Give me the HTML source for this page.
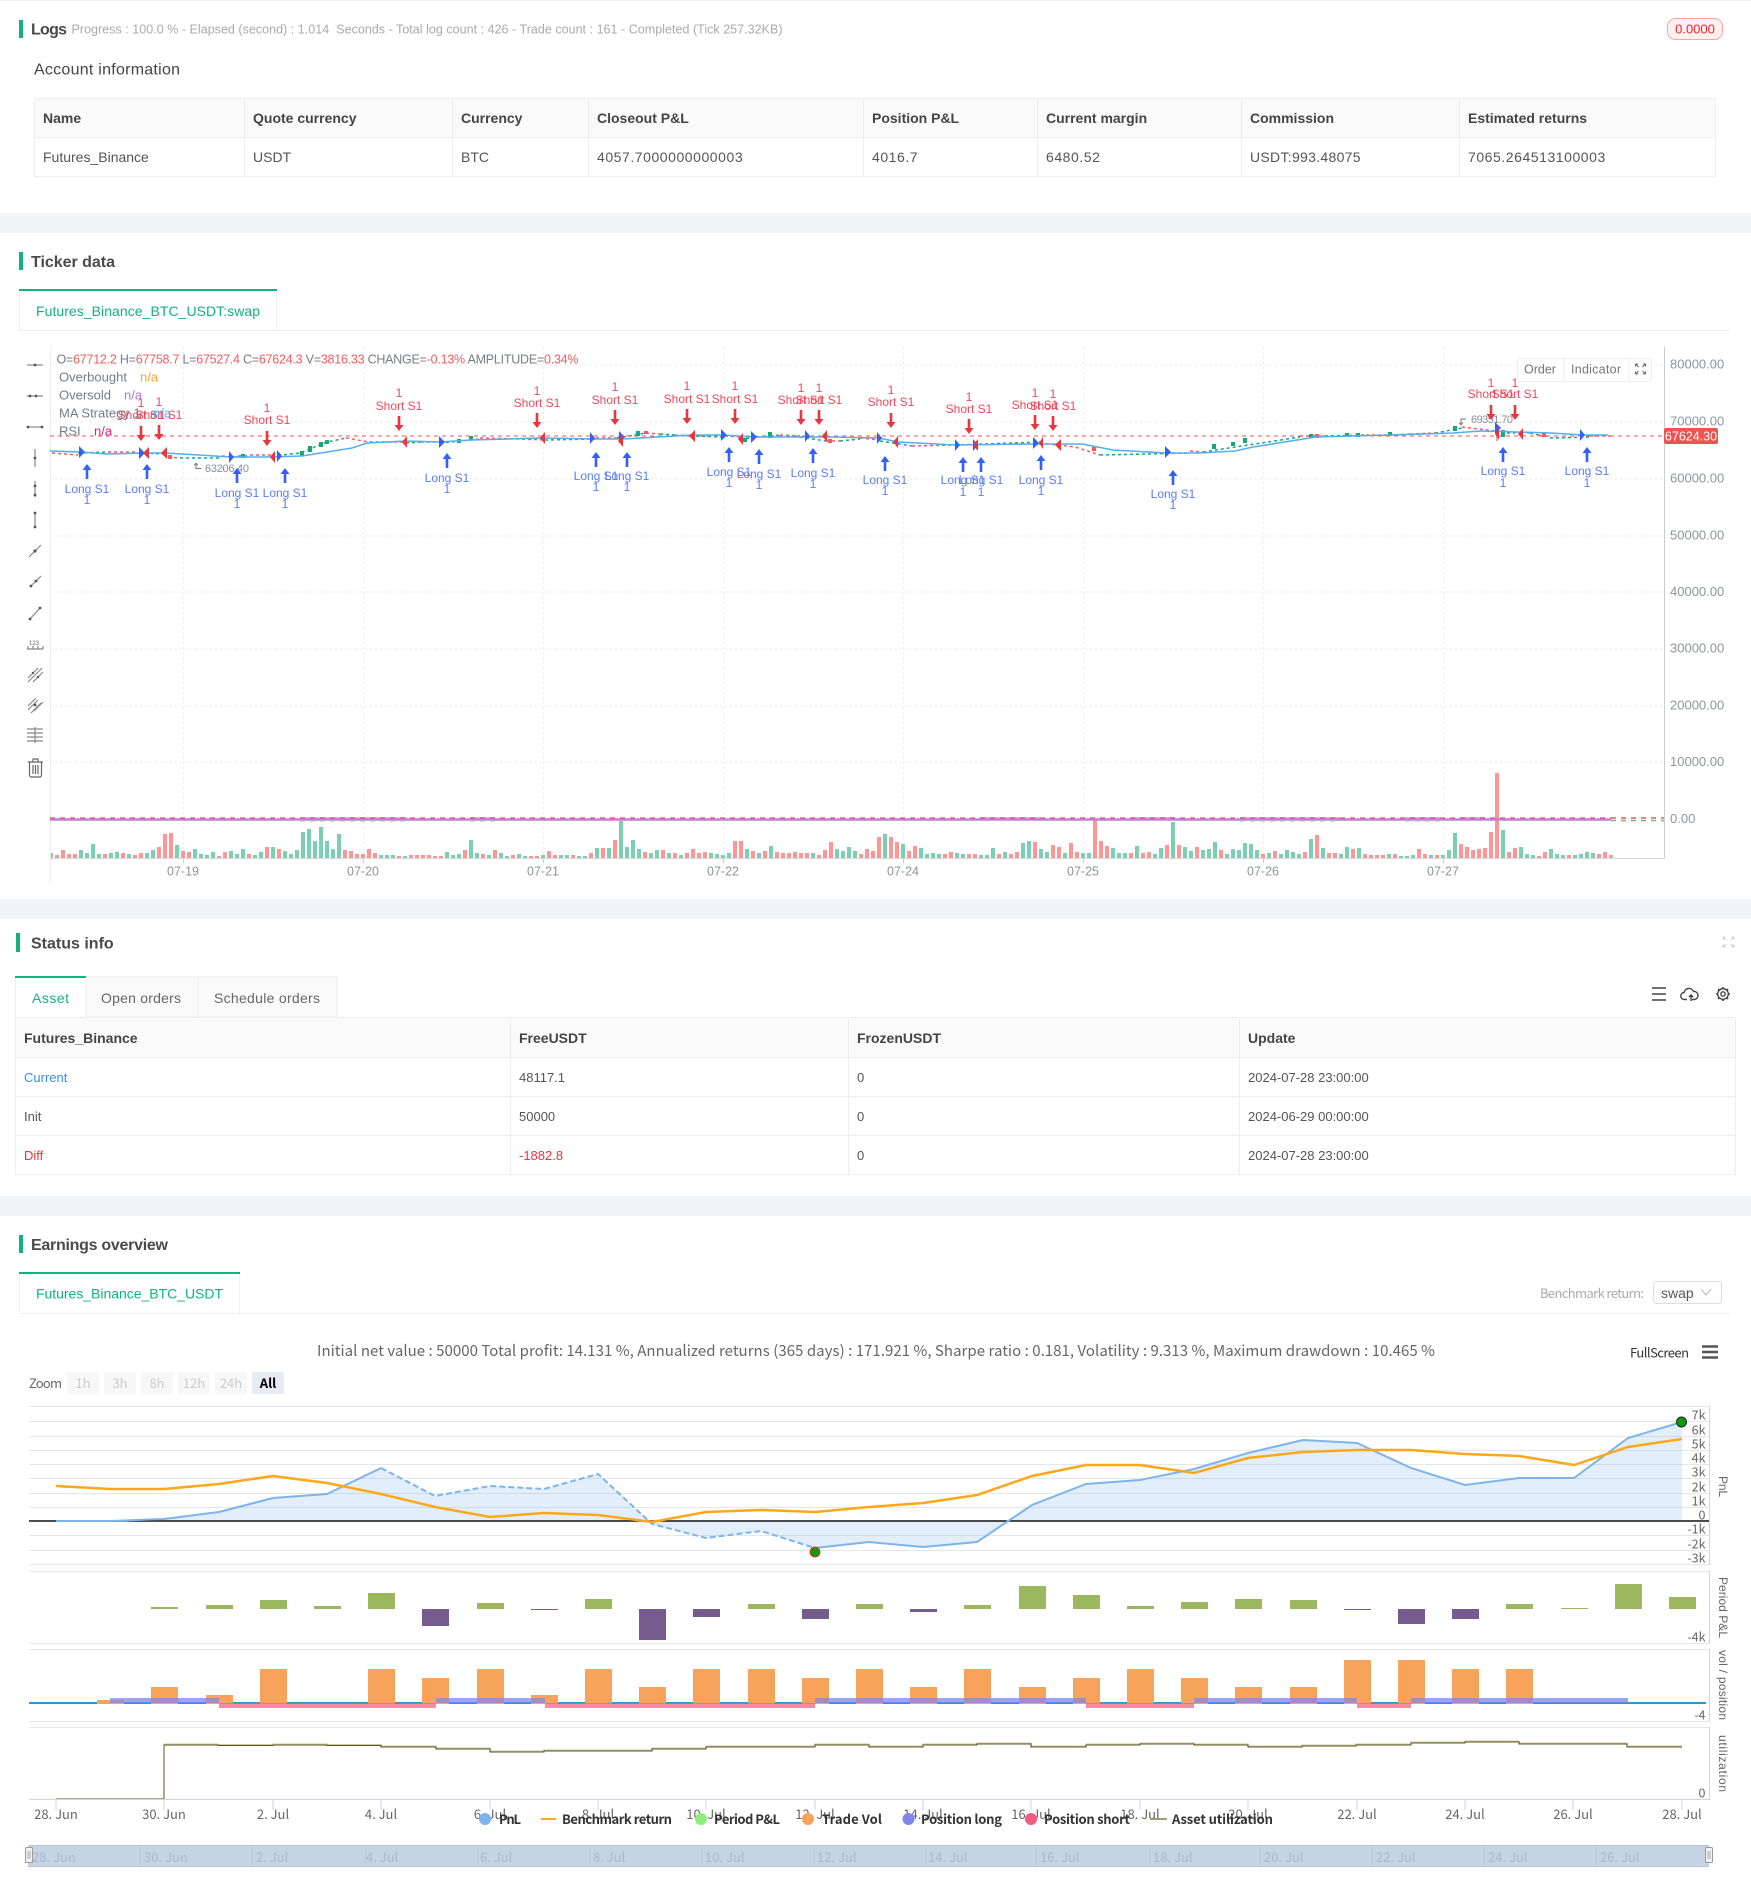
<!DOCTYPE html>
<html lang="en">
<head>
<meta charset="utf-8">
<title>Backtest report</title>
<style>
html,body{margin:0;padding:0;background:#fff}
body{width:1751px;height:1896px;position:relative;overflow:hidden;font-family:"Liberation Sans",sans-serif;color:#555}
svg.page{position:absolute;left:0;top:0}
svg text{font-family:"Liberation Sans",sans-serif}
svg .hc text,svg text.hc{font-family:"Noto Sans CJK SC","Liberation Sans",sans-serif}
table{position:absolute;border-collapse:collapse;table-layout:fixed;font-size:14px;color:#555}
td,th{border:1px solid #eee;padding:0 8px;text-align:left;white-space:nowrap;overflow:hidden}
th{background:#fafafa;color:#444;font-weight:700}
td.n{letter-spacing:.55px}
td.m{letter-spacing:.3px}
.s text{font-size:12px;text-anchor:middle}
.l text{fill:#5b7cf6}
.h text{fill:#f0485a}
</style>
</head>
<body>
<svg class="page" width="1751" height="1896" viewBox="0 0 1751 1896" xmlns="http://www.w3.org/2000/svg">
<defs>
<path id="up" d="M0 0l-4.500 6h3.200v9h2.600v-9h3.200z" fill="#3460f5"/>
<path id="dn" d="M-1.300 0v9h-3.200l4.500 6 4.500-6h-3.200v-9z" fill="#e8353f"/>
</defs>

<!-- section bands -->
<rect x="0" y="0" width="1751" height="1" fill="#f0f1f3"/>
<rect x="0" y="213" width="1751" height="20" fill="#f3f4f6"/>
<rect x="0" y="899" width="1751" height="20" fill="#f3f4f6"/>
<rect x="0" y="1196" width="1751" height="20" fill="#f3f4f6"/>

<!-- Logs -->
<rect x="19" y="20" width="4" height="18" fill="#14b17f"/>
<text x="31" y="34.500" font-size="16" font-weight="700" fill="#4a4a4a" textLength="36">Logs</text>
<text x="71.500" y="33.500" font-size="12.500" fill="#aaa" textLength="711" xml:space="preserve">Progress : 100.0 % - Elapsed (second) : 1.014  Seconds - Total log count : 426 - Trade count : 161 - Completed (Tick 257.32KB)</text>
<rect x="1667.500" y="18.500" width="55" height="21" rx="8" fill="#fff1f0" stroke="#ffa39e"/>
<text x="1695" y="33.500" font-size="13" fill="#f5222d" text-anchor="middle">0.0000</text>
<text x="34" y="74.500" font-size="16" fill="#444" textLength="146">Account information</text>

<!-- Ticker header -->
<rect x="19" y="252" width="4" height="18" fill="#14b17f"/>
<text x="31" y="267" font-size="16" font-weight="700" fill="#4a4a4a" textLength="84">Ticker data</text>
<path d="M19 330.500H1730" stroke="#eee"/>
<path d="M19.500 291V330M276.500 291V330" stroke="#f0f0f0"/>
<rect x="19" y="289" width="258" height="2" fill="#14b17f"/>
<text x="36" y="316" font-size="14" fill="#14b17f" textLength="224">Futures_Binance_BTC_USDT:swap</text>

<!-- main chart grid -->
<g stroke="#e9e9e9" stroke-dasharray="2 3">
<path d="M50 365H1664M50 422H1664M50 479H1664M50 536H1664M50 592H1664M50 649H1664M50 706H1664M50 762H1664"/>
<path d="M183.500 347V858M363.500 347V858M543.500 347V858M723.500 347V858M903.500 347V858M1083.500 347V858M1263.500 347V858M1443.500 347V858"/>
</g>
<path d="M1664.500 347V858" stroke="#ccc"/>
<path d="M183.500 858v5M363.500 858v5M543.500 858v5M723.500 858v5M903.500 858v5M1083.500 858v5M1263.500 858v5M1443.500 858v5" stroke="#ccc"/>

<!-- volume -->
<path fill="none" stroke="#7bcfb2" stroke-width="4" d="M51 858v-5M81 858v-8M87 858v-5M93 858v-14M99 858v-4M111 858v-5M117 858v-6M129 858v-4M147 858v-5M153 858v-8M177 858v-13M195 858v-9M201 858v-4M207 858v-3M213 858v-6M231 858v-7M237 858v-4M243 858v-9M255 858v-3M261 858v-6M273 858v-11M285 858v-7M291 858v-4M297 858v-8M303 858v-26M309 858v-29M315 858v-17M321 858v-31M327 858v-17M333 858v-9M339 858v-24M381 858v-3M387 858v-3M393 858v-3M405 858v-2M447 858v-6M453 858v-3M459 858v-4M471 858v-18M477 858v-5M489 858v-3M501 858v-5M507 858v-2M519 858v-4M525 858v-2M543 858v-3M561 858v-3M567 858v-3M579 858v-2M585 858v-2M597 858v-10M609 858v-10M621 858v-37M627 858v-11M633 858v-18M639 858v-9M651 858v-5M657 858v-8M669 858v-5M681 858v-3M711 858v-5M717 858v-4M723 858v-3M729 858v-5M747 858v-9M759 858v-5M771 858v-12M813 858v-5M837 858v-9M843 858v-7M849 858v-11M855 858v-7M885 858v-24M903 858v-14M921 858v-10M927 858v-4M933 858v-5M939 858v-4M957 858v-5M963 858v-4M981 858v-3M987 858v-3M993 858v-10M1005 858v-6M1023 858v-15M1029 858v-17M1041 858v-9M1047 858v-6M1065 858v-5M1083 858v-5M1089 858v-5M1113 858v-10M1119 858v-5M1125 858v-5M1137 858v-12M1155 858v-4M1161 858v-10M1173 858v-36M1185 858v-11M1191 858v-7M1203 858v-8M1209 858v-9M1215 858v-16M1227 858v-4M1233 858v-9M1239 858v-8M1245 858v-15M1251 858v-14M1257 858v-8M1269 858v-5M1281 858v-4M1287 858v-8M1293 858v-6M1299 858v-4M1311 858v-19M1323 858v-10M1341 858v-4M1347 858v-11M1359 858v-10M1389 858v-4M1401 858v-2M1407 858v-2M1413 858v-3M1431 858v-3M1443 858v-3M1449 858v-8M1455 858v-25M1503 858v-28M1521 858v-11M1527 858v-4M1533 858v-3M1551 858v-9M1557 858v-4M1563 858v-3M1575 858v-3M1581 858v-4M1587 858v-6M1593 858v-5"/>
<path fill="none" stroke="#ff9696" stroke-width="4" d="M57 858v-3M63 858v-8M69 858v-4M75 858v-4M105 858v-4M123 858v-5M135 858v-3M141 858v-5M159 858v-11M165 858v-24M171 858v-25M183 858v-7M189 858v-6M219 858v-2M225 858v-6M249 858v-4M267 858v-11M279 858v-9M345 858v-8M351 858v-7M357 858v-4M363 858v-4M369 858v-9M375 858v-5M399 858v-2M411 858v-3M417 858v-3M423 858v-3M429 858v-3M435 858v-2M441 858v-2M465 858v-8M483 858v-4M495 858v-8M513 858v-3M531 858v-2M537 858v-2M549 858v-7M555 858v-3M573 858v-3M591 858v-5M603 858v-10M615 858v-18M645 858v-6M663 858v-8M675 858v-5M687 858v-5M693 858v-9M699 858v-5M705 858v-6M735 858v-17M741 858v-17M753 858v-7M765 858v-7M777 858v-6M783 858v-5M789 858v-5M795 858v-6M801 858v-5M807 858v-5M819 858v-3M825 858v-8M831 858v-16M861 858v-4M867 858v-9M873 858v-7M879 858v-21M891 858v-21M897 858v-16M909 858v-7M915 858v-12M945 858v-4M951 858v-6M969 858v-4M975 858v-4M999 858v-4M1011 858v-4M1017 858v-6M1035 858v-16M1053 858v-13M1059 858v-11M1071 858v-15M1077 858v-6M1095 858v-39M1101 858v-17M1107 858v-12M1131 858v-5M1143 858v-5M1149 858v-6M1167 858v-13M1179 858v-13M1197 858v-11M1221 858v-8M1263 858v-4M1275 858v-7M1305 858v-6M1317 858v-23M1329 858v-5M1335 858v-5M1353 858v-9M1365 858v-4M1371 858v-3M1377 858v-3M1383 858v-3M1395 858v-4M1419 858v-9M1425 858v-4M1437 858v-3M1461 858v-14M1467 858v-11M1473 858v-8M1479 858v-9M1485 858v-10M1491 858v-26M1497 858v-85M1509 858v-6M1515 858v-10M1539 858v-2M1545 858v-6M1569 858v-3M1599 858v-4M1605 858v-6M1611 858v-3"/>
<rect x="40" y="845" width="10" height="14" fill="#fff"/>
<path d="M50.500 347V883" stroke="#eee"/>
<path d="M50 858.500H1664.500" stroke="#d9d9d9"/>

<!-- RSI lines -->
<path d="M50 819.500H1611" stroke="#bf82d0" stroke-width="2.500"/>
<path d="M300 818H407M470 818H495M980 818H1040M1130 818H1175M1240 818H1340M1405 818H1440M1460 818H1485" stroke="#c795d8" stroke-width="1.500"/>
<path d="M300 821H407M470 821H495M1240 821H1340M1405 821H1440" stroke="#a5d6b8" stroke-width="1.200" stroke-dasharray="5 5"/>
<path d="M50 818H1611" stroke="#ea2f7d" stroke-opacity=".85" stroke-width="1.200" stroke-dasharray="5 5"/>
<path d="M1611 818H1664" stroke="#d9605a" stroke-width="1.500" stroke-dasharray="5 5"/>
<path d="M1611 820.500H1664" stroke="#7db27f" stroke-width="1.500" stroke-dasharray="5 5"/>

<!-- price line -->
<path d="M50 436H1664" stroke="#ff4d4f" stroke-width="1" stroke-dasharray="4 4"/>
<path fill="none" stroke="#f25c5f" stroke-width="1.500" stroke-dasharray="3 3" d="M52 453L78 455M108 452L138 452M168 457L180 458M222 456L238 457M250 455L272 455M346 438L369 442L406 442M421 442L440 442M480 438L520 439L545 440M596 438L617 438M646 433L660 434M675 435L690 436M725 436L740 437M780 435L800 436M826 441L840 441M860 438L880 440M912 446L955 445M1040 443L1075 447L1100 455M1190 451L1203 452M1300 436L1325 436M1366 435L1395 435M1410 434L1435 433M1462 427L1495 431M1515 432L1530 433M1538 435L1550 437M1590 436L1611 436"/>
<path fill="none" stroke="#14a97a" stroke-width="1.500" stroke-dasharray="3 3" d="M78 453L108 452M138 453L166 454M180 458L222 458M238 456L250 456M272 456L300 453L327 442L346 438M406 443L421 442M440 443L480 439M545 440L596 439M617 438L646 433M660 434L675 435M690 436L725 437M740 439L780 435M800 437L826 441M840 441L860 439M880 441L912 446M955 445L1040 442M1100 455L1190 453M1203 452L1300 437M1325 436L1366 435M1395 435L1410 434M1435 433L1462 428M1495 433L1515 433M1530 433L1538 435M1550 438L1590 437"/>
<g fill="#14a97a"><rect x="241" y="454" width="4" height="4"/><rect x="300" y="451" width="4" height="5"/><rect x="308" y="446" width="4" height="6"/><rect x="319" y="442" width="4" height="5"/><rect x="325" y="440" width="4" height="4"/><rect x="457" y="439" width="4" height="4"/><rect x="469" y="436" width="4" height="4"/><rect x="636" y="431" width="4" height="5"/><rect x="743" y="438" width="4" height="4"/><rect x="768" y="432" width="4" height="6"/><rect x="1212" y="444" width="4" height="5"/><rect x="1231" y="442" width="4" height="4"/><rect x="1243" y="438" width="4" height="5"/><rect x="1309" y="434" width="4" height="4"/><rect x="1345" y="433" width="4" height="4"/><rect x="1356" y="433" width="4" height="4"/><rect x="1388" y="432" width="4" height="4"/><rect x="1453" y="426" width="4" height="5"/><rect x="1501" y="430" width="4" height="7"/></g>
<g fill="#f25c5f"><rect x="168" y="455" width="4" height="4"/><rect x="644" y="431" width="4" height="3"/><rect x="828" y="439" width="4" height="4"/><rect x="1315" y="434" width="4" height="4"/><rect x="1092" y="446" width="4" height="5"/><rect x="1542" y="433" width="4" height="4"/></g>
<path d="M1497 430V441" stroke="#f9a0a0" stroke-width="2"/>
<path fill="none" stroke="#55aef0" stroke-width="1.600" d="M50 451L80 452L107 454L142 453L165 453L199 455L230 457L268 457L302 456L352 448L367 443L406 441L440 442L471 440L540 438L597 439L623 439L692 435L722 435L753 437L807 437L830 437L879 438L898 442L956 445L1032 444L1082 444L1113 450L1166 453L1200 453L1235 451L1253 447L1316 437L1390 435L1453 433L1481 431L1551 433L1583 435L1608 435"/>

<!-- entry triangles -->
<g fill="#3460f5"><polygon points="79,446 85,452 79,458"/><polygon points="139,447 145,453 139,459"/><polygon points="229,451 234,457 229,463"/><polygon points="277,450 282,456 277,462"/><polygon points="439,436 445,442 439,448"/><polygon points="590,432 595,438 590,444"/><polygon points="619,431 625,437 619,443"/><polygon points="721,429 727,435 721,441"/><polygon points="751,431 757,437 751,443"/><polygon points="805,430 810,436 805,442"/><polygon points="877,432 882,438 877,444"/><polygon points="955,439 960,445 955,451"/><polygon points="973,439 978,445 973,451"/><polygon points="1033,437 1039,443 1033,449"/><polygon points="1165,446 1171,452 1165,458"/><polygon points="1495,422 1501,428 1495,434"/><polygon points="1580,429 1585,435 1580,441"/></g>
<g fill="#e8353f"><polygon points="149,447 143,453 149,459"/><polygon points="167,447 161,453 167,459"/><polygon points="275,451 270,457 275,463"/><polygon points="407,436 402,442 407,448"/><polygon points="545,432 540,438 545,444"/><polygon points="623,435 618,441 623,447"/><polygon points="695,430 689,436 695,442"/><polygon points="743,433 738,439 743,445"/><polygon points="827,430 822,436 827,442"/><polygon points="898,436 893,442 898,448"/><polygon points="978,439 973,445 978,451"/><polygon points="1043,437 1039,443 1043,449"/><polygon points="1061,439 1055,445 1061,451"/><polygon points="1499,428 1495,434 1499,440"/><polygon points="1523,428 1518,434 1523,440"/></g>

<!-- annotations -->
<path d="M201.500 468.500H196V463M196 463l-2 2.500M196 463l2 2.500" fill="none" stroke="#777" stroke-width="1"/>
<text x="205" y="472" font-size="11" fill="#8a8d96" textLength="44">63206.40</text>
<path d="M1466 419h-5v6M1461 425l-2-2.500M1461 425l2-2.500" fill="none" stroke="#777" stroke-width="1"/>
<text x="1471" y="423" font-size="11" fill="#8a8d96" textLength="42">69351.70</text>

<!-- long signals -->
<g class="s l">
<use href="#up" x="87" y="464"/><text x="87" y="493">Long S1</text><text x="87" y="504">1</text>
<use href="#up" x="147" y="464"/><text x="147" y="493">Long S1</text><text x="147" y="504">1</text>
<use href="#up" x="237" y="468"/><text x="237" y="497">Long S1</text><text x="237" y="508">1</text>
<use href="#up" x="285" y="468"/><text x="285" y="497">Long S1</text><text x="285" y="508">1</text>
<use href="#up" x="447" y="453"/><text x="447" y="482">Long S1</text><text x="447" y="493">1</text>
<use href="#up" x="596" y="452"/><text x="596" y="480">Long S1</text><text x="596" y="491">1</text>
<use href="#up" x="627" y="452"/><text x="627" y="480">Long S1</text><text x="627" y="491">1</text>
<use href="#up" x="729" y="447"/><text x="729" y="476">Long S1</text><text x="729" y="487">1</text>
<use href="#up" x="759" y="449"/><text x="759" y="478">Long S1</text><text x="759" y="489">1</text>
<use href="#up" x="813" y="448"/><text x="813" y="477">Long S1</text><text x="813" y="488">1</text>
<use href="#up" x="885" y="456"/><text x="885" y="484">Long S1</text><text x="885" y="495">1</text>
<use href="#up" x="963" y="457"/><text x="963" y="484">Long S1</text><text x="963" y="496">1</text>
<use href="#up" x="981" y="457"/><text x="981" y="484">Long S1</text><text x="981" y="496">1</text>
<use href="#up" x="1041" y="455"/><text x="1041" y="484">Long S1</text><text x="1041" y="495">1</text>
<use href="#up" x="1173" y="470"/><text x="1173" y="498">Long S1</text><text x="1173" y="509">1</text>
<use href="#up" x="1503" y="447"/><text x="1503" y="475">Long S1</text><text x="1503" y="487">1</text>
<use href="#up" x="1587" y="447"/><text x="1587" y="475">Long S1</text><text x="1587" y="487">1</text>
</g>
<!-- short signals -->
<g class="s h">
<text x="141" y="407">1</text><text x="141" y="419">Short S1</text><use href="#dn" x="141" y="426"/>
<text x="159" y="406">1</text><text x="159" y="419">Short S1</text><use href="#dn" x="159" y="425"/>
<text x="267" y="412">1</text><text x="267" y="424">Short S1</text><use href="#dn" x="267" y="431"/>
<text x="399" y="397">1</text><text x="399" y="410">Short S1</text><use href="#dn" x="399" y="416"/>
<text x="537" y="395">1</text><text x="537" y="407">Short S1</text><use href="#dn" x="537" y="413"/>
<text x="615" y="391">1</text><text x="615" y="404">Short S1</text><use href="#dn" x="615" y="410"/>
<text x="687" y="390">1</text><text x="687" y="403">Short S1</text><use href="#dn" x="687" y="409"/>
<text x="735" y="390">1</text><text x="735" y="403">Short S1</text><use href="#dn" x="735" y="409"/>
<text x="801" y="392">1</text><text x="801" y="404">Short S1</text><use href="#dn" x="801" y="410"/>
<text x="819" y="392">1</text><text x="819" y="404">Short S1</text><use href="#dn" x="819" y="410"/>
<text x="891" y="394">1</text><text x="891" y="406">Short S1</text><use href="#dn" x="891" y="413"/>
<text x="969" y="401">1</text><text x="969" y="413">Short S1</text><use href="#dn" x="969" y="419"/>
<text x="1035" y="397">1</text><text x="1035" y="409">Short S1</text><use href="#dn" x="1035" y="415"/>
<text x="1053" y="398">1</text><text x="1053" y="410">Short S1</text><use href="#dn" x="1053" y="416"/>
<text x="1491" y="387">1</text><text x="1491" y="398">Short S1</text><use href="#dn" x="1491" y="405"/>
<text x="1515" y="387">1</text><text x="1515" y="398">Short S1</text><use href="#dn" x="1515" y="405"/>
</g>

<!-- chart legend -->
<text x="56.500" y="363.500" font-size="12.500" fill="#787b86" textLength="522"><tspan>O=</tspan><tspan fill="#f25c5f">67712.2</tspan><tspan> H=</tspan><tspan fill="#f25c5f">67758.7</tspan><tspan> L=</tspan><tspan fill="#f25c5f">67527.4</tspan><tspan> C=</tspan><tspan fill="#f25c5f">67624.3</tspan><tspan> V=</tspan><tspan fill="#f25c5f">3816.33</tspan><tspan> CHANGE=</tspan><tspan fill="#f25c5f">-0.13%</tspan><tspan> AMPLITUDE=</tspan><tspan fill="#f25c5f">0.34%</tspan></text>
<g font-size="13" fill="#787b86">
<text x="59" y="381.500">Overbought</text><text x="140" y="381.500" fill="#ffa726">n/a</text>
<text x="59" y="399.500">Oversold</text><text x="124" y="399.500" fill="#a978d8">n/a</text>
<text x="59" y="417.500">MA Strategy 1</text><text x="153" y="417.500" fill="#55aef0">n/a</text>
<text x="59" y="435.500">RSI</text><text x="94" y="435.500" fill="#e91e80">n/a</text>
</g>

<!-- axis labels -->
<g font-size="13" fill="#8f939c">
<text x="1670" y="368.500">80000.00</text><text x="1670" y="425.500">70000.00</text><text x="1670" y="482.500">60000.00</text><text x="1670" y="539.500">50000.00</text><text x="1670" y="596">40000.00</text><text x="1670" y="652.500">30000.00</text><text x="1670" y="709.500">20000.00</text><text x="1670" y="766">10000.00</text><text x="1670" y="823">0.00</text>
</g>
<g font-size="12.500" fill="#8f939c" text-anchor="middle">
<text x="183" y="875.500">07-19</text><text x="363" y="875.500">07-20</text><text x="543" y="875.500">07-21</text><text x="723" y="875.500">07-22</text><text x="903" y="875.500">07-24</text><text x="1083" y="875.500">07-25</text><text x="1263" y="875.500">07-26</text><text x="1443" y="875.500">07-27</text>
</g>
<rect x="1664" y="428" width="54" height="16" rx="2" fill="#ef5350"/>
<text x="1691" y="440.500" font-size="12.500" fill="#fff" text-anchor="middle">67624.30</text>

<!-- order / indicator -->
<rect x="1517.500" y="358.500" width="134" height="23" rx="3" fill="#fff" fill-opacity=".9" stroke="#eee"/>
<path d="M1564 359V381M1629 359V381" stroke="#eee"/>
<text x="1524" y="373.500" font-size="12.500" fill="#777">Order</text>
<text x="1571" y="373.500" font-size="12.500" fill="#777" textLength="50">Indicator</text>
<path d="M1635.500 364l3 3M1635.500 364h2.500M1635.500 364v2.500M1645.500 364l-3 3M1645.500 364h-2.500M1645.500 364v2.500M1635.500 374l3-3M1635.500 374h2.500M1635.500 374v-2.500M1645.500 374l-3-3M1645.500 374h-2.500M1645.500 374v-2.500" fill="none" stroke="#666" stroke-width="1"/>

<!-- drawing tool icons -->
<g stroke="#888" stroke-width="1.200" fill="#555">
<path d="M27 365H43"/><circle cx="35" cy="365" r="1.400" stroke="none"/>
<path d="M27 396H43"/><circle cx="30" cy="396" r="1.400" stroke="none"/><circle cx="36" cy="396" r="1.400" stroke="none"/>
<path d="M27 427H43"/><circle cx="28" cy="427" r="1.400" stroke="none"/><circle cx="42" cy="427" r="1.400" stroke="none"/>
<path d="M35 449V467"/><circle cx="35" cy="458" r="1.400" stroke="none"/>
<path d="M35 481V497"/><circle cx="35" cy="486" r="1.400" stroke="none"/><circle cx="35" cy="495" r="1.400" stroke="none"/>
<path d="M35 513V527"/><circle cx="35" cy="513" r="1.400" stroke="none"/><circle cx="35" cy="527" r="1.400" stroke="none"/>
<path d="M29 557L41 545"/><circle cx="35" cy="551" r="1.600" stroke="none"/>
<path d="M30 587L41 576"/><circle cx="31" cy="586" r="1.400" stroke="none"/><circle cx="36" cy="581" r="1.400" stroke="none"/>
<path d="M30 619L40 608"/><circle cx="30" cy="619" r="1.400" stroke="none"/><circle cx="40" cy="608" r="1.400" stroke="none"/>
<path d="M27 649H43M28 649v-3M33 649v-3M38 649v-3M43 649v-3" fill="none"/>
<path d="M28 678L38 668M33 682L43 672M28 682L42 668" fill="none"/><circle cx="33" cy="673" r="1.200" stroke="none"/><circle cx="38" cy="677" r="1.200" stroke="none"/>
<path d="M28 710L38 700M31 713L41 703M34 711L43 702M28 706L36 698" fill="none"/><circle cx="35" cy="705" r="1.400" stroke="none"/>
<path d="M27 729H43M27 733H43M27 737H43M27 741H43M35 727V743" fill="none"/>
<path d="M28 762H43M33 762v-3h5v3M29.500 762V775a2 2 0 0 0 2 2h8a2 2 0 0 0 2-2V762M33 765V774M35.500 765V774M38 765V774" fill="none" stroke="#666"/>
</g>
<text x="29" y="645" font-size="6" fill="#666">123</text>

<!-- Status info -->
<rect x="16" y="933" width="4" height="19" fill="#14b17f"/>
<text x="31" y="948.500" font-size="16" font-weight="700" fill="#4a4a4a">Status info</text>
<path d="M1723 937l3 3M1723 937h2.500M1723 937v2.500M1734 937l-3 3M1734 937h-2.500M1734 937v2.500M1723 947l3-3M1723 947h2.500M1723 947v-2.500M1734 947l-3-3M1734 947h-2.500M1734 947v-2.500" fill="none" stroke="#ccc" stroke-width="1"/>
<rect x="86" y="977" width="112" height="40" fill="#fafafa" stroke="#eee"/>
<rect x="198" y="977" width="139" height="40" fill="#fafafa" stroke="#eee"/>
<rect x="15" y="976" width="71" height="2" fill="#14b17f"/>
<path d="M15.500 978V1018" stroke="#eee"/>
<text x="32" y="1003" font-size="14" fill="#14b17f" textLength="37">Asset</text>
<text x="101" y="1003" font-size="14" fill="#666" textLength="80">Open orders</text>
<text x="214" y="1003" font-size="14" fill="#666" textLength="106">Schedule orders</text>
<path d="M1652 988h14M1652 994h14M1652 1000h14" stroke="#444" stroke-width="1.600"/>
<path d="M1687 999.500h-2.500a3.500 3.500 0 0 1-.5-7 5 5 0 0 1 9.500-1 4 4 0 0 1 1 8h-2.500M1691 1001v-6M1689 997l2-2 2 2" fill="none" stroke="#444" stroke-width="1.400"/>
<circle cx="1723" cy="994" r="2.200" fill="none" stroke="#444" stroke-width="1.300"/>
<circle cx="1723" cy="994" r="5.300" fill="none" stroke="#444" stroke-width="1.300"/>
<path d="M1723 987v2M1723 999v2M1716 994h2M1728 994h2M1718 989l1.400 1.400M1726.600 997.600l1.400 1.400M1728 989l-1.400 1.400M1719.400 997.600l-1.400 1.400" stroke="#444" stroke-width="1.600"/>

<!-- Earnings overview -->
<rect x="19" y="1235" width="4" height="18" fill="#14b17f"/>
<text x="31" y="1250" font-size="16" font-weight="700" fill="#4a4a4a" textLength="137">Earnings overview</text>
<path d="M19 1313.500H1730" stroke="#eee"/>
<path d="M19.500 1274V1313M239.500 1274V1313" stroke="#f0f0f0"/>
<rect x="19" y="1272" width="221" height="2" fill="#14b17f"/>
<text x="36" y="1298.500" font-size="14" fill="#14b17f" textLength="187">Futures_Binance_BTC_USDT</text>
<text x="1540" y="1298" class="hc" font-size="13" fill="#aaa" textLength="104">Benchmark return:</text>
<rect x="1653.500" y="1281.500" width="68" height="22" rx="3" fill="#fff" stroke="#ddd"/>
<text x="1661" y="1298" font-size="14" fill="#555">swap</text>
<path d="M1701 1289l5 6 5-6" fill="none" stroke="#bbb"/>

<text class="hc" x="317" y="1356" font-size="15" fill="#666" textLength="1118">Initial net value : 50000 Total profit: 14.131 %, Annualized returns (365 days) : 171.921 %, Sharpe ratio : 0.181, Volatility : 9.313 %, Maximum drawdown : 10.465 %</text>
<text class="hc" x="1630" y="1357.500" font-size="13" fill="#333" textLength="59">FullScreen</text>
<path d="M1702 1346.500h16M1702 1352h16M1702 1357.500h16" stroke="#555" stroke-width="2.600"/>

<!-- range selector -->
<text class="hc" x="29" y="1388" font-size="13" fill="#666" textLength="33">Zoom</text>
<g fill="#f7f7f7"><rect x="67" y="1372" width="32" height="22" rx="2"/><rect x="104" y="1372" width="32" height="22" rx="2"/><rect x="141" y="1372" width="32" height="22" rx="2"/><rect x="178" y="1372" width="32" height="22" rx="2"/><rect x="215" y="1372" width="32" height="22" rx="2"/></g>
<rect x="252" y="1372" width="32" height="22" rx="2" fill="#e6ebf5"/>
<g class="hc" font-size="13" fill="#ccc" text-anchor="middle"><text x="83" y="1388">1h</text><text x="120" y="1388">3h</text><text x="157" y="1388">8h</text><text x="194" y="1388">12h</text><text x="231" y="1388">24h</text><text x="268" y="1388" fill="#000" font-weight="700">All</text></g>

<!-- PnL pane -->
<path d="M29 1406.500H1709M29 1421.500H1709M29 1436.500H1709M29 1450.500H1709M29 1464.500H1709M29 1478.500H1709M29 1493.500H1709M29 1507.500H1709M29 1535.500H1709M29 1550.500H1709M29 1564.500H1709" stroke="#e6e6e6"/>
<path d="M1709.500 1406V1565" stroke="#ccd6eb"/>
<path fill="#7cb5ec" fill-opacity=".22" d="M56 1521L110 1521L164 1519L219 1512L273 1498L327 1494L381 1468L435 1496L490 1486L544 1489L598 1474L652 1524L706 1538L761 1531L815 1548L869 1542L923 1547L977 1542L1032 1505L1086 1484L1140 1480L1194 1469L1248 1453L1303 1440L1357 1443L1411 1468L1465 1485L1519 1478L1574 1478L1628 1438L1682 1422L1682 1521Z"/>
<path d="M29 1521H1709" stroke="#111" stroke-width="1.500"/>
<path fill="none" stroke="#7cb5ec" stroke-width="2" d="M56 1521L110 1521L164 1519L219 1512L273 1498L327 1494L381 1468"/>
<path fill="none" stroke="#7cb5ec" stroke-width="2" stroke-dasharray="6 3" d="M381 1468L435 1496L490 1486L544 1489L598 1474L652 1524L706 1538L761 1531L815 1548"/>
<path fill="none" stroke="#7cb5ec" stroke-width="2" d="M815 1548L869 1542L923 1547L977 1542L1032 1505L1086 1484L1140 1480L1194 1469L1248 1453L1303 1440L1357 1443L1411 1468L1465 1485L1519 1478L1574 1478L1628 1438L1682 1422"/>
<path fill="none" stroke="#ffa71a" stroke-width="2.500" d="M56 1486L110 1489L164 1489L219 1484L273 1476L327 1483L381 1494L435 1507L490 1517L544 1513L598 1515L652 1522L706 1512L761 1510L815 1512L869 1507L923 1503L977 1495L1032 1476L1086 1465L1140 1465L1194 1473L1248 1458L1303 1452L1357 1450L1411 1450L1465 1454L1519 1456L1574 1465L1628 1447L1682 1439"/>
<circle cx="815" cy="1552" r="5" fill="#0a9a0a" stroke="#f03030"/>
<circle cx="1681.500" cy="1422" r="5" fill="#0a9a0a" stroke="#222"/>
<g class="hc" font-size="12.500" fill="#666" text-anchor="end">
<text x="1705.500" y="1419.500">7k</text><text x="1705.500" y="1434.500">6k</text><text x="1705.500" y="1448.500">5k</text><text x="1705.500" y="1462.500">4k</text><text x="1705.500" y="1476.500">3k</text><text x="1705.500" y="1491.500">2k</text><text x="1705.500" y="1505.500">1k</text><text x="1705.500" y="1519.500">0</text><text x="1705.500" y="1533.500">-1k</text><text x="1705.500" y="1548.500">-2k</text><text x="1705.500" y="1562.500">-3k</text>
<text x="1705.500" y="1641.500">-4k</text><text x="1705.500" y="1719.500">-4</text><text x="1705.500" y="1797.500">0</text>
</g>
<g font-size="12" fill="#666">
<text transform="translate(1719 1476) rotate(90)" textLength="21">PnL</text>
<text transform="translate(1719 1577) rotate(90)" textLength="61">Period P&amp;L</text>
<text transform="translate(1719 1650) rotate(90)" textLength="70">vol / position</text>
<text transform="translate(1719 1735) rotate(90)" textLength="57">utilization</text>
</g>

<!-- Period P&L pane -->
<path d="M29 1571.500H1709M29 1643.500H1709M29 1649.500H1709M29 1721.500H1709M29 1727.500H1709" stroke="#e6e6e6"/>
<path d="M1709.500 1571V1644M1709.500 1649V1722M1709.500 1727V1800" stroke="#ccd6eb"/>
<g fill="#9bb85f">
<rect x="151" y="1607" width="27" height="2"/><rect x="206" y="1605" width="27" height="4"/><rect x="260" y="1600" width="27" height="9"/><rect x="314" y="1606" width="27" height="3"/><rect x="368" y="1593" width="27" height="16"/><rect x="477" y="1603" width="27" height="6"/><rect x="585" y="1599" width="27" height="10"/><rect x="748" y="1604" width="27" height="5"/><rect x="856" y="1604" width="27" height="5"/><rect x="964" y="1605" width="27" height="4"/><rect x="1019" y="1586" width="27" height="23"/><rect x="1073" y="1595" width="27" height="14"/><rect x="1127" y="1606" width="27" height="3"/><rect x="1181" y="1602" width="27" height="7"/><rect x="1235" y="1599" width="27" height="10"/><rect x="1290" y="1600" width="27" height="9"/><rect x="1506" y="1604" width="27" height="5"/><rect x="1561" y="1608" width="27" height="1"/><rect x="1615" y="1584" width="27" height="25"/><rect x="1669" y="1597" width="27" height="12"/>
</g>
<g fill="#755c8e">
<rect x="422" y="1609" width="27" height="17"/><rect x="531" y="1609" width="27" height="1"/><rect x="639" y="1609" width="27" height="31"/><rect x="693" y="1609" width="27" height="8"/><rect x="802" y="1609" width="27" height="10"/><rect x="910" y="1609" width="27" height="3"/><rect x="1344" y="1609" width="27" height="1"/><rect x="1398" y="1609" width="27" height="15"/><rect x="1452" y="1609" width="27" height="10"/>
</g>

<!-- vol / position pane -->
<path d="M29 1703H1706" stroke="#1f9dd0" stroke-width="2"/>
<g fill="#f7a35c">
<rect x="97" y="1700" width="27" height="4"/><rect x="151" y="1687" width="27" height="17"/><rect x="206" y="1695" width="27" height="9"/><rect x="260" y="1669" width="27" height="35"/><rect x="368" y="1669" width="27" height="35"/><rect x="422" y="1678" width="27" height="26"/><rect x="477" y="1669" width="27" height="35"/><rect x="531" y="1695" width="27" height="9"/><rect x="585" y="1669" width="27" height="35"/><rect x="639" y="1687" width="27" height="17"/><rect x="693" y="1669" width="27" height="35"/><rect x="748" y="1669" width="27" height="35"/><rect x="802" y="1678" width="27" height="26"/><rect x="856" y="1669" width="27" height="35"/><rect x="910" y="1687" width="27" height="17"/><rect x="964" y="1669" width="27" height="35"/><rect x="1019" y="1687" width="27" height="17"/><rect x="1073" y="1678" width="27" height="26"/><rect x="1127" y="1669" width="27" height="35"/><rect x="1181" y="1678" width="27" height="26"/><rect x="1235" y="1687" width="27" height="17"/><rect x="1290" y="1687" width="27" height="17"/><rect x="1344" y="1660" width="27" height="44"/><rect x="1398" y="1660" width="27" height="44"/><rect x="1452" y="1669" width="27" height="35"/><rect x="1506" y="1669" width="27" height="35"/>
</g>
<g fill="#8085e9" fill-opacity=".75">
<rect x="110" y="1698" width="109" height="5"/><rect x="436" y="1698" width="109" height="5"/><rect x="815" y="1698" width="271" height="5"/><rect x="1194" y="1698" width="163" height="5"/><rect x="1411" y="1698" width="217" height="5"/>
</g>
<g fill="#f15c80" fill-opacity=".7">
<rect x="219" y="1703" width="217" height="5"/><rect x="545" y="1703" width="270" height="5"/><rect x="1086" y="1703" width="108" height="5"/><rect x="1357" y="1703" width="54" height="5"/>
</g>

<!-- utilization pane -->
<path d="M29 1799.500H1709" stroke="#ccd6eb"/>
<path d="M56 1798.500H164" stroke="#b4ae88" stroke-width="1"/>
<path fill="none" stroke="#b4ae88" stroke-width="1.500" stroke-opacity=".7" d="M164 1744.300H218V1744.800H273V1744.300H327V1744.800H381V1746.300H436V1748.300H490V1751.300H544V1750.300H652V1748.300H706V1746.300H761V1746.300H815V1744.300H869V1746.300H923V1744.300H977V1743.300H1031V1746.300H1086V1744.300H1140V1743.300H1194V1744.300H1248V1746.300H1302V1745.300H1356V1744.300H1411V1742.300H1465V1741.300H1519V1743.300H1573V1743.300H1627V1746.300H1682"/>
<path fill="none" stroke="#625518" stroke-width="1" d="M164 1799V1745H218V1745.500H273V1745H327V1745.500H381V1747H436V1749H490V1752H544V1751H652V1749H706V1747H761V1747H815V1745H869V1747H923V1745H977V1744H1031V1747H1086V1745H1140V1744H1194V1745H1248V1747H1302V1746H1356V1745H1411V1743H1465V1742H1519V1744H1573V1744H1627V1747H1682"/>
<path d="M56 1800v10M164 1800v10M273 1800v10M381 1800v10M490 1800v10M598 1800v10M706 1800v10M815 1800v10M923 1800v10M1031 1800v10M1140 1800v10M1248 1800v10M1357 1800v10M1465 1800v10M1573 1800v10M1682 1800v10" stroke="#ccd6eb"/>
<g class="hc" font-size="13" fill="#666" text-anchor="middle">
<text x="56" y="1819">28. Jun</text><text x="164" y="1819">30. Jun</text><text x="273" y="1819">2. Jul</text><text x="381" y="1819">4. Jul</text><text x="490" y="1819">6. Jul</text><text x="598" y="1819">8. Jul</text><text x="706" y="1819">10. Jul</text><text x="815" y="1819">12. Jul</text><text x="923" y="1819">14. Jul</text><text x="1031" y="1819">16. Jul</text><text x="1140" y="1819">18. Jul</text><text x="1248" y="1819">20. Jul</text><text x="1357" y="1819">22. Jul</text><text x="1465" y="1819">24. Jul</text><text x="1573" y="1819">26. Jul</text><text x="1682" y="1819">28. Jul</text>
</g>

<!-- legend -->
<circle cx="485" cy="1819" r="6" fill="#7cb5ec"/>
<rect x="541" y="1818" width="15" height="2" fill="#ffa71a"/>
<circle cx="701" cy="1819" r="6" fill="#90ed7d"/>
<circle cx="808" cy="1819" r="6" fill="#f7a35c"/>
<circle cx="908.500" cy="1819" r="6" fill="#8085e9"/>
<circle cx="1031" cy="1819" r="6" fill="#f15c80"/>
<rect x="1150" y="1818" width="17" height="2" fill="#a39b72"/>
<g class="hc" font-size="13" font-weight="700" fill="#333">
<text x="499" y="1824" textLength="22">PnL</text><text x="562" y="1824" textLength="110">Benchmark return</text><text x="714" y="1824" textLength="66">Period P&amp;L</text><text x="822" y="1824" textLength="60">Trade Vol</text><text x="921" y="1824" textLength="81">Position long</text><text x="1044" y="1824" textLength="86">Position short</text><text x="1172" y="1824" textLength="101">Asset utilization</text>
</g>

<!-- navigator -->
<rect x="28" y="1845" width="1681" height="21" fill="#c6d3e4"/>
<path d="M28 1866.500H1709M28 1845.500H1709" stroke="#b9c6d8"/>
<path d="M140.500 1846v20M252.500 1846v20M365.500 1846v20M477.500 1846v20M589.500 1846v20M701.500 1846v20M814.500 1846v20M925.500 1846v20M1036.500 1846v20M1149.500 1846v20M1260.500 1846v20M1372.500 1846v20M1484.500 1846v20M1596.500 1846v20" stroke="#bccadd"/>
<g class="hc" font-size="13" fill="#aab8cc">
<text x="32" y="1862">28. Jun</text><text x="144" y="1862">30. Jun</text><text x="256" y="1862">2. Jul</text><text x="366" y="1862">4. Jul</text><text x="480" y="1862">6. Jul</text><text x="593" y="1862">8. Jul</text><text x="705" y="1862">10. Jul</text><text x="817" y="1862">12. Jul</text><text x="928" y="1862">14. Jul</text><text x="1040" y="1862">16. Jul</text><text x="1153" y="1862">18. Jul</text><text x="1264" y="1862">20. Jul</text><text x="1376" y="1862">22. Jul</text><text x="1488" y="1862">24. Jul</text><text x="1600" y="1862">26. Jul</text>
</g>
<rect x="25.500" y="1847.500" width="7" height="15" rx="1" fill="#f2f2f2" stroke="#999"/>
<path d="M28 1851v8M30 1851v8" stroke="#999" stroke-width=".8"/>
<rect x="1705.500" y="1847.500" width="7" height="15" rx="1" fill="#f2f2f2" stroke="#999"/>
<path d="M1708 1851v8M1710 1851v8" stroke="#999" stroke-width=".8"/>
</svg>

<table style="left:34px;top:98px;width:1681px">
<colgroup><col style="width:210px"><col style="width:208px"><col style="width:136px"><col style="width:275px"><col style="width:174px"><col style="width:204px"><col style="width:218px"><col style="width:256px"></colgroup>
<tr style="height:39px"><th>Name</th><th>Quote currency</th><th>Currency</th><th>Closeout P&amp;L</th><th>Position P&amp;L</th><th>Current margin</th><th>Commission</th><th>Estimated returns</th></tr>
<tr style="height:39px"><td>Futures_Binance</td><td>USDT</td><td>BTC</td><td class="n">4057.7000000000003</td><td class="n">4016.7</td><td class="n">6480.52</td><td class="m">USDT:993.48075</td><td class="n">7065.264513100003</td></tr>
</table>

<table style="left:15px;top:1017px;width:1720px">
<colgroup><col style="width:495px"><col style="width:338px"><col style="width:391px"><col style="width:496px"></colgroup>
<tr style="height:40px"><th>Futures_Binance</th><th>FreeUSDT</th><th>FrozenUSDT</th><th>Update</th></tr>
<tr style="height:39px;font-size:13px"><td style="color:#3b8fde">Current</td><td>48117.1</td><td>0</td><td>2024-07-28 23:00:00</td></tr>
<tr style="height:39px;font-size:13px"><td>Init</td><td>50000</td><td>0</td><td>2024-06-29 00:00:00</td></tr>
<tr style="height:39px;font-size:13px"><td style="color:#e8353f">Diff</td><td style="color:#e8353f">-1882.8</td><td>0</td><td>2024-07-28 23:00:00</td></tr>
</table>
</body>
</html>
